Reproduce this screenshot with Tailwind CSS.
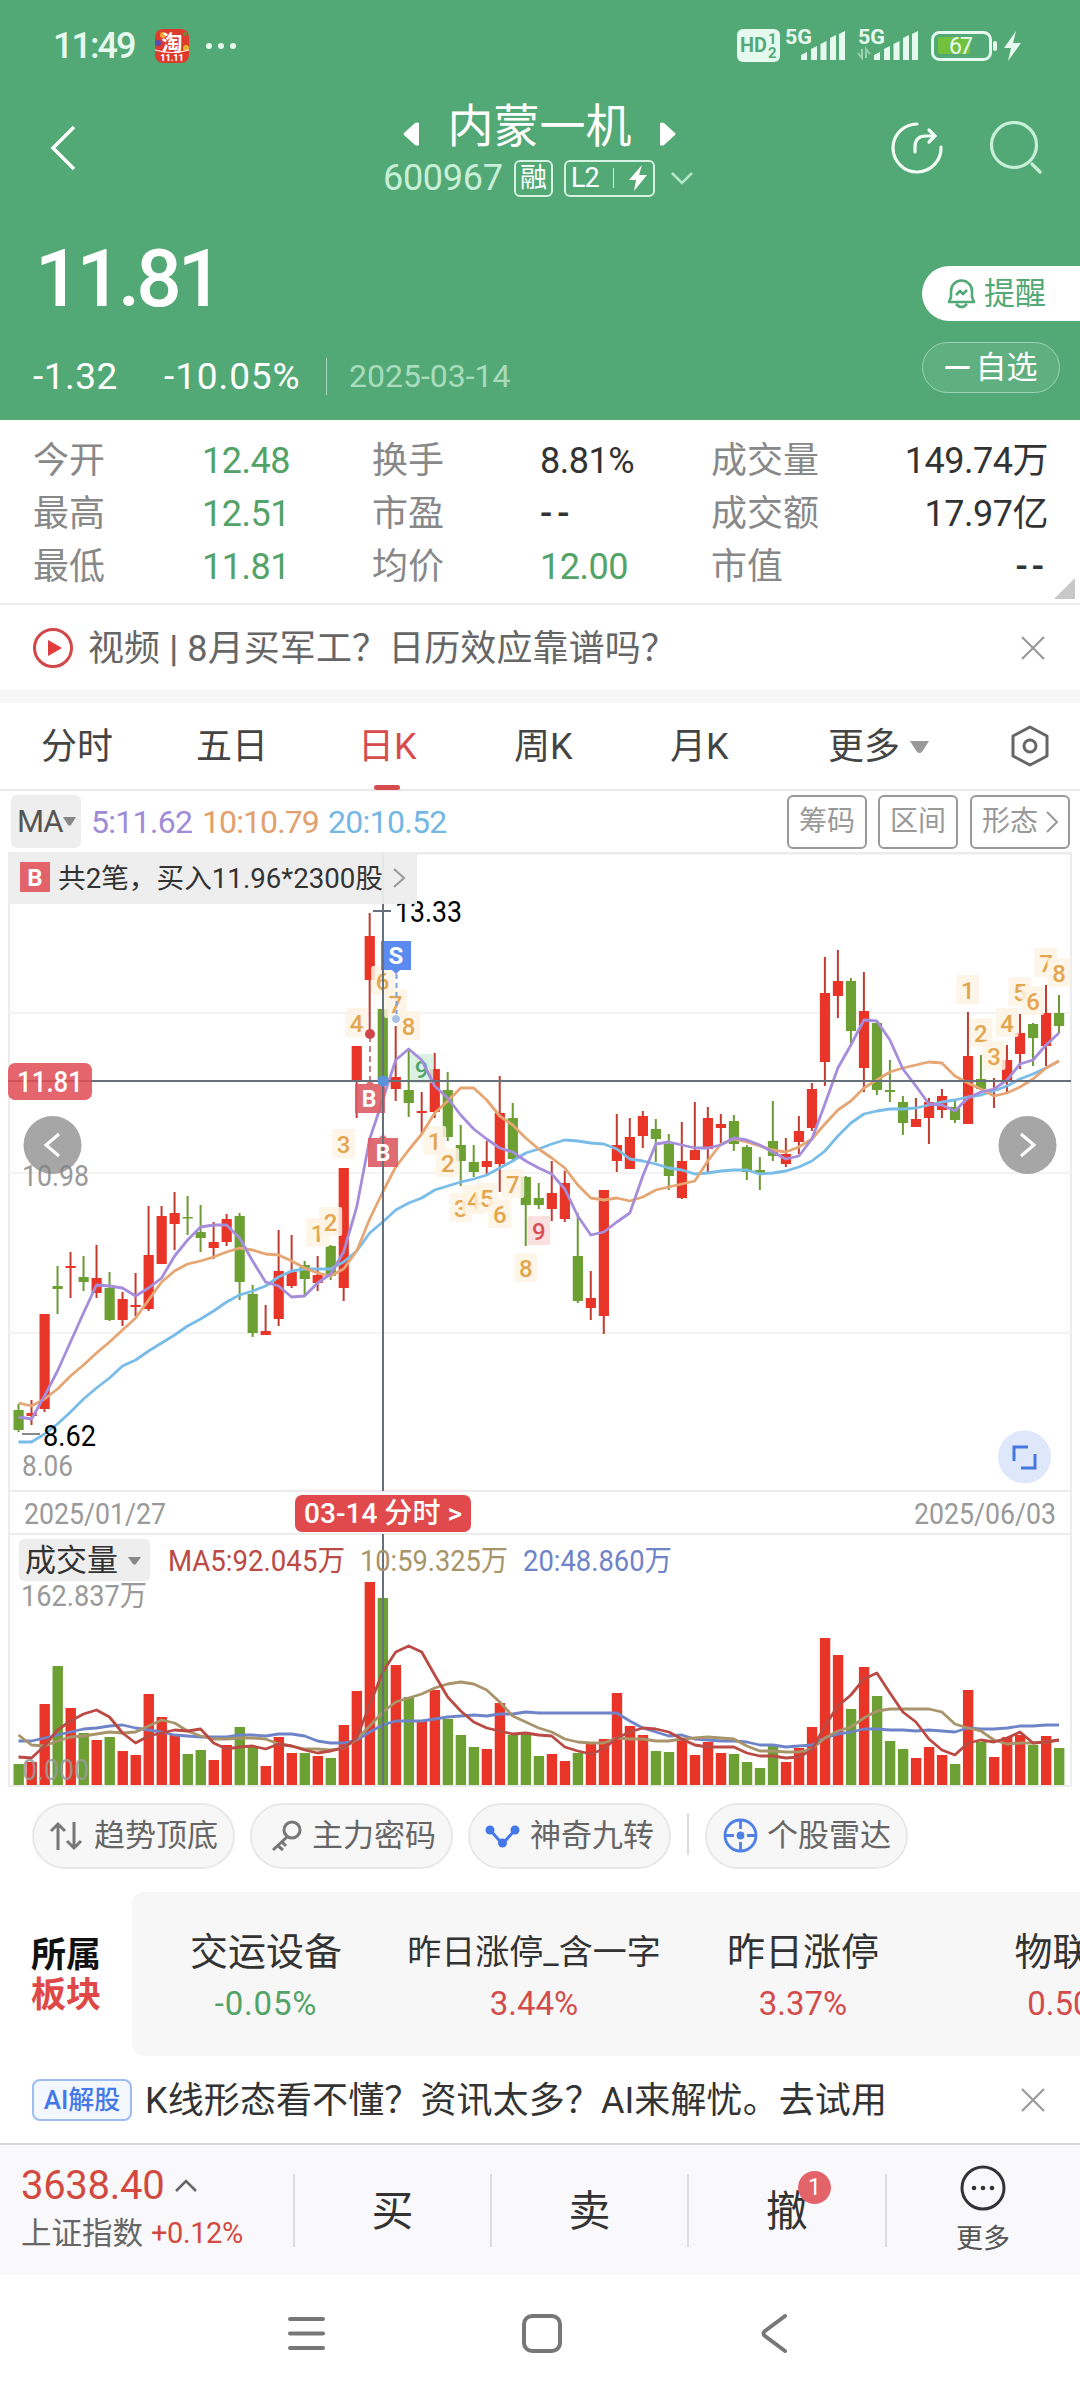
<!DOCTYPE html>
<html lang="zh-CN">
<head>
  <meta charset="UTF-8" />
  <meta name="viewport" content="width=device-width, initial-scale=1.0" />
  <title>内蒙一机 600967</title>
  <script src="https://cdn.jsdelivr.net/npm/@tailwindcss/browser@4"></script>
</head>
<body class="w-[1080px] h-[2400px] overflow-hidden bg-white text-[#333] font-['Roboto','Noto_Sans_CJK_SC',sans-serif]">

  <header class="h-[420px] bg-[#53a976] text-white">
    <!-- status bar -->
    <div class="h-[92px] flex items-center pl-[53px] text-[#e6f9ee]">
      <span class="w-[102px] text-[36px] font-medium tracking-[-2px]">11:49</span>
      <svg width="34" height="34" viewBox="0 0 34 34">
        <rect width="34" height="34" rx="8" fill="#df3b2c" />
        <circle cx="8" cy="6" r="3" fill="#f2a32c" /><circle cx="3" cy="14" r="3" fill="#5a4bb5" />
        <circle cx="31" cy="19" r="3" fill="#e8b62c" /><circle cx="30" cy="5" r="2" fill="#6c8f3a" />
        <text x="17" y="21" font-size="21" font-weight="700" fill="#fff" text-anchor="middle">淘</text>
        <path d="M0 21q17 5 34 0" stroke="#fff" fill="none" />
        <text x="17" y="32" font-size="9" font-weight="900" fill="#fff" text-anchor="middle">11.11</text>
      </svg>
      <span class="ml-[17px] flex gap-1.5">
        <i class="size-1.5 rounded-full bg-[#e6f9ee]"></i><i class="size-1.5 rounded-full bg-[#e6f9ee]"></i><i class="size-1.5 rounded-full bg-[#e6f9ee]"></i>
      </span>
      <svg class="ml-auto mr-[56px]" width="287" height="40" viewBox="737 26 287 40" fill="#e6f9ee">
        <rect x="737" y="29" width="43" height="33" rx="6" />
        <g fill="#53a976" font-weight="700">
          <text x="740" y="52" font-size="20" textLength="27" lengthAdjust="spacingAndGlyphs">HD</text>
          <text x="768" y="44" font-size="15">1</text>
          <text x="768" y="58" font-size="15">2</text>
        </g>
        <text x="785" y="44" font-size="20" font-weight="700" textLength="27" lengthAdjust="spacingAndGlyphs">5G</text>
        <path d="M801 60v-5l6-3v8zM811 60v-11l6-3v14zM820.500 60v-16l6-3v19zM830 60v-22l6-3v25zM839 60v-26l6-3v29z" />
        <text x="858" y="44" font-size="20" font-weight="700" textLength="27" lengthAdjust="spacingAndGlyphs">5G</text>
        <path d="M874 60v-5l6-3v8zM884 60v-11l6-3v14zM893.500 60v-16l6-3v19zM903 60v-22l6-3v25zM912 60v-26l6-3v29z" />
        <path d="M858 53l4 5v-9M870 54l-4-5v9" fill="none" stroke="#9bd0b0" stroke-width="2" />
        <rect x="932.500" y="32.500" width="58" height="27" rx="7" fill="none" stroke="#e6f9ee" stroke-width="3" />
        <rect x="938" y="37" width="32" height="17" rx="2" fill="#72c13c" />
        <text x="949" y="54" font-size="23" textLength="24">67</text>
        <rect x="993" y="41" width="4" height="10" rx="2" />
        <path d="M1016 31l-12 17h7l-3 13 13-18h-8z" />
      </svg>
    </div>

    <!-- title bar -->
    <div class="h-[112px] flex items-center">
      <svg class="ml-[48px]" width="30" height="48" viewBox="0 0 30 48" fill="none" stroke="#fff" stroke-width="3.500"><path d="M26 3L5 24l21 21" /></svg>
      <div class="ml-[305px] flex-1 flex flex-col pb-[6px]">
        <div class="flex items-center h-[66px] ml-[19px]">
          <svg width="18" height="26" viewBox="0 0 18 26" fill="#fff" class="mt-4"><path d="M17 2v22q-2 1-4 0L2 14q-1-1 0-2L13 2q2-1 4 0z" /></svg>
          <h1 class="w-[239px] text-center text-[46px] leading-none font-normal">内蒙一机</h1>
          <svg width="18" height="26" viewBox="0 0 18 26" fill="#fff" class="mt-4"><path d="M1 2v22q2 1 4 0l11-10q1-1 0-2L5 2q-2-1-4 0z" /></svg>
        </div>
        <div class="flex items-center h-[38px] leading-none">
          <span class="w-[131px] text-[36px] text-[#c8f0d8] tracking-[-0.3px]">600967</span>
          <span class="w-[39px] h-[37px] border-2 border-[#d5f3e1] rounded-md flex items-center justify-center text-[27px]">融</span>
          <span class="ml-[11px] w-[91px] h-[37px] border-2 border-[#d5f3e1] rounded-md flex items-center pl-[5px] text-[27px] tracking-[-1px]">L2
            <i class="ml-[14px] w-px h-[20px] bg-[#d5f3e1]"></i>
            <svg class="ml-[14px]" width="20" height="26" viewBox="0 0 20 26" fill="#fff"><path d="M14 0L1 15h7L6 26 19 10h-8z" /></svg>
          </span>
          <svg class="ml-[15px]" width="24" height="14" viewBox="0 0 24 14" fill="none" stroke="#b6e6c9" stroke-width="2.500"><path d="M2 2l10 10L22 2" /></svg>
        </div>
      </div>
      <svg class="mr-[45px]" width="54" height="54" viewBox="0 0 54 54" fill="none" stroke="#f2fdf6" stroke-width="3.200" stroke-linecap="round">
        <path d="M27 3a24 24 0 1 0 24 23" />
        <path d="M25 31v-5q0-11 11-11h9M39 9l6 6-6 6" />
      </svg>
      <svg class="mr-[37px]" width="54" height="54" viewBox="0 0 54 54" fill="none" stroke="#c8f0d8" stroke-width="3.200" stroke-linecap="round">
        <circle cx="25" cy="24" r="22.500" /><path d="M43 43l8 8" />
      </svg>
    </div>

    <!-- last price -->
    <div class="h-[216px] flex justify-between">
      <div>
        <div class="pt-[35px] pl-[35px] text-[80px] leading-[80px] font-medium tracking-[-4px]">11.81</div>
        <div class="mt-[37px] flex items-center h-[40px] text-[37px] leading-none">
          <span class="pl-[33px] w-[164px] tracking-[0.5px]">-1.32</span>
          <span class="w-[162px] tracking-[0.9px]">-10.05%</span>
          <i class="w-px h-[37px] bg-[#a9dcbc]"></i>
          <span class="ml-[22px] text-[32px] text-[#a9dcbc]">2025-03-14</span>
        </div>
      </div>
      <div class="pt-[62px] w-[158px]">
        <div class="h-[55px] pl-[25px] rounded-l-full bg-white text-[#53a976] flex items-center text-[31px]">
          <svg width="29" height="31" viewBox="0 0 29 31" fill="none" stroke="#53a976" stroke-width="2.600" stroke-linejoin="round">
            <path d="M4 19v-6a10.500 10.500 0 0 1 21 0v6l2 5H2zM9 26q5.500 6 11 0" /><path d="M9 17l4-4 3 3 4-4" />
          </svg>
          <span class="ml-[8px] pt-[2px]">提醒</span>
        </div>
        <div class="mt-[21px] w-[138px] h-[51px] rounded-full border border-[#9bd5b1] bg-white/8 flex items-center justify-center text-[31px]"><i class="w-[25px] h-[3px] rounded bg-white mr-[6px]"></i><span class="pt-[2px]">自选</span></div>
      </div>
    </div>
  </header>

  <!-- quote stats -->
  <section class="relative h-[185px] pt-[14px] border-b-2 border-[#ededed]">
    <div class="grid grid-cols-[169px_170px_168px_171px_180px_157px] pl-[33px] auto-rows-[53px] items-center text-[36px] leading-none tracking-[-0.5px] text-[#333]">
      <span class="text-[#888] tracking-normal">今开</span><span class="text-[#53a368]">12.48</span>
      <span class="text-[#888] tracking-normal">换手</span><span>8.81%</span>
      <span class="text-[#888] tracking-normal">成交量</span><span class="text-right whitespace-nowrap">149.74万</span>
      <span class="text-[#888] tracking-normal">最高</span><span class="text-[#53a368]">12.51</span>
      <span class="text-[#888] tracking-normal">市盈</span><span class="tracking-[5px] font-medium">--</span>
      <span class="text-[#888] tracking-normal">成交额</span><span class="text-right whitespace-nowrap">17.97亿</span>
      <span class="text-[#888] tracking-normal">最低</span><span class="text-[#53a368]">11.81</span>
      <span class="text-[#888] tracking-normal">均价</span><span class="text-[#53a368]">12.00</span>
      <span class="text-[#888] tracking-normal">市值</span><span class="text-right tracking-[4px] font-medium">--</span>
    </div>
    <svg class="absolute right-[5px] bottom-[4px]" width="21" height="21"><path d="M21 0v21H0z" fill="#c8c8c8" /></svg>
  </section>

  <!-- video tip -->
  <section class="h-[85px] pl-[33px] pr-[35px] flex items-center text-[#666]">
    <svg width="40" height="40" viewBox="0 0 40 40"><circle cx="20" cy="20" r="18.500" fill="none" stroke="#d24848" stroke-width="3" /><path d="M15 12l14 8-14 8z" fill="#e03c3c" /></svg>
    <span class="ml-[15px] pt-[2px] flex-1 text-[36px] tracking-[0.1px]">视频 <b class="font-medium">|</b> 8月买军工？日历效应靠谱吗？</span>
    <svg width="24" height="24" viewBox="0 0 24 24" stroke="#999" stroke-width="2.200"><path d="M1 1l22 22M23 1L1 23" /></svg>
  </section>
  <div class="h-[13px] bg-[#f7f7f7]"></div>

  <!-- period tabs -->
  <nav class="relative h-[88px] border-b-2 border-[#e9e9e9] flex items-center pl-[41px] pt-[2px] text-[36px] text-[#444]">
    <span class="w-[155px]">分时</span>
    <span class="w-[162px]">五日</span>
    <span class="w-[156px] text-[#d64c4c]">日K</span>
    <span class="w-[156px]">周K</span>
    <span class="w-[158px]">月K</span>
    <span>更多</span>
    <svg class="ml-[10px]" width="19" height="13"><path d="M0 0h19l-7 11q-2 2-5 0z" fill="#999" /></svg>
    <svg class="absolute right-[30px] top-[22px]" width="40" height="42" viewBox="0 0 40 42" fill="none" stroke="#666" stroke-width="3" stroke-linejoin="round"><path d="M20 2l17 9v20l-17 9-17-9V11z" /><circle cx="20" cy="21" r="6" /></svg>
    <i class="absolute left-[374px] bottom-[-1px] w-[26px] h-[5px] rounded-full bg-[#d64c4c]"></i>
  </nav>

  <!-- indicator row -->
  <div class="h-[61px] pl-[11px] pr-[10px] flex items-center text-[32px] leading-none">
    <span class="w-[70px] h-[53px] bg-[#eee] rounded-md flex items-center pl-[6px] text-[31px] tracking-[-1px] text-[#555]">MA
      <svg width="13" height="10"><path d="M0 0h13l-5 8q-1.500 1-3 0z" fill="#888" /></svg>
    </span>
    <span class="ml-[10px] w-[111px] text-[#a08bd8] tracking-[-0.7px]">5:11.62</span>
    <span class="w-[126px] text-[#e2a06c] tracking-[-0.9px]">10:10.79</span>
    <span class="text-[#74b6e4] tracking-[-0.7px]">20:10.52</span>
    <span class="ml-auto w-[80px] h-[54px] border-2 border-[#999] rounded-md flex items-center justify-center text-[28px] text-[#999]">筹码</span>
    <span class="ml-[11px] w-[80px] h-[54px] border-2 border-[#999] rounded-md flex items-center justify-center text-[28px] text-[#999]">区间</span>
    <span class="ml-[12px] w-[100px] h-[54px] border-2 border-[#999] rounded-md flex items-center justify-center text-[28px] text-[#999]">形态
      <svg class="ml-[8px]" width="12" height="22" viewBox="0 0 12 22" fill="none" stroke="#999" stroke-width="2"><path d="M1 1l10 10L1 21" /></svg>
    </span>
  </div>

  <!-- candles and volume, drawn by the script below -->
  <svg id="chart" class="block" width="1080" height="936" viewBox="0 852 1080 936"></svg>

  <!-- strategy chips -->
  <section class="h-[104px] pl-[32px] flex items-center text-[31px] leading-none text-[#666] pb-[13px]">
    <span class="w-[203px] h-[66px] mt-[4px] rounded-full bg-[#f7f7f7] border-2 border-[#e8e8e8] flex items-center pl-[15px]">
      <svg class="mr-[9px]" width="36" height="30" viewBox="0 0 36 30" fill="none" stroke="#777" stroke-width="3"><path d="M9 29V3M2 10l7-7 7 7M25 1v26M18 20l7 7 7-7" /></svg>趋势顶底</span>
    <span class="ml-[15px] w-[203px] h-[66px] mt-[4px] rounded-full bg-[#f7f7f7] border-2 border-[#e8e8e8] flex items-center pl-[19px]">
      <svg class="mr-[9px]" width="32" height="32" viewBox="0 0 32 32" fill="none" stroke="#777" stroke-width="3"><circle cx="21" cy="10" r="8" /><path d="M16 17L2 30M6 25l6 5M10 21l5 5" /></svg>主力密码</span>
    <span class="ml-[15px] w-[203px] h-[66px] mt-[4px] rounded-full bg-[#f7f7f7] border-2 border-[#e8e8e8] flex items-center pl-[15px]">
      <svg class="mr-[10px]" width="35" height="26" viewBox="0 0 35 26"><path d="M5 7l12.500 14L30 7" fill="none" stroke="#4478e8" stroke-width="3" /><g fill="#4478e8"><circle cx="5" cy="7" r="4.500" /><circle cx="17.500" cy="20" r="4.500" /><circle cx="30" cy="7" r="4.500" /></g></svg>神奇九转</span>
    <i class="mx-[16px] w-[2px] h-[42px] bg-[#ddd]"></i>
    <span class="w-[203px] h-[66px] mt-[4px] rounded-full bg-[#f7f7f7] border-2 border-[#e8e8e8] flex items-center pl-[16px]">
      <svg class="mr-[9px]" width="35" height="35" viewBox="0 0 35 35" fill="none" stroke="#4f80e6" stroke-width="2.800"><circle cx="17.500" cy="17.500" r="15.500" /><path d="M17.500 2v9M17.500 24v9M2 17.500h9M24 17.500h9" /><circle cx="17.500" cy="17.500" r="2.500" fill="#4f80e6" /></svg>个股雷达</span>
  </section>

  <!-- related sectors -->
  <section class="h-[164px] flex items-center">
    <div class="w-[132px] pl-[31px] pt-[3px] text-[35px] leading-[40px] font-bold text-[#111]">所属<br /><span class="text-[#e04848]">板块</span></div>
    <div class="flex-1 h-full bg-[#f7f7f7] rounded-l-xl flex items-center overflow-hidden text-center">
      <div class="w-[268px] pt-[7px] shrink-0"><div class="h-[52px] text-[38px] leading-[50px]">交运设备</div><div class="text-[33px] leading-[50px] tracking-[0.8px] text-[#53a368]">-0.05%</div></div>
      <i class="w-px h-[63px] bg-[#ccc]"></i>
      <div class="w-[268px] pt-[7px] shrink-0"><div class="h-[52px] text-[34px] leading-[50px] whitespace-nowrap">昨日涨停_含一字</div><div class="text-[33px] leading-[50px] text-[#d24c4c]">3.44%</div></div>
      <i class="w-px h-[63px] bg-[#ccc]"></i>
      <div class="w-[268px] pt-[7px] pl-[2px] shrink-0"><div class="h-[52px] text-[38px] leading-[50px]">昨日涨停</div><div class="text-[33px] leading-[50px] text-[#d24c4c]">3.37%</div></div>
      <i class="w-px h-[63px] bg-[#ccc]"></i>
      <div class="w-[268px] pt-[7px] pl-[3px] shrink-0"><div class="h-[52px] text-[38px] leading-[50px]">物联网</div><div class="text-[33px] leading-[50px] text-[#d24c4c]">0.50%</div></div>
    </div>
  </section>

  <!-- AI tip -->
  <section class="h-[87px] pl-[32px] pr-[35px] flex items-center">
    <span class="w-[100px] h-[42px] border-2 border-[#9dbcf0] bg-[#f3f7ff] rounded-lg flex items-center justify-center text-[26px] leading-none text-[#4478e8] whitespace-nowrap font-medium">AI解股</span>
    <span class="ml-[13px] pt-[2px] flex-1 text-[36px] tracking-[0.1px] whitespace-nowrap">K线形态看不懂？资讯太多？AI来解忧。去试用</span>
    <svg width="24" height="24" viewBox="0 0 24 24" stroke="#999" stroke-width="2.200"><path d="M1 1l22 22M23 1L1 23" /></svg>
  </section>

  <!-- trade bar -->
  <footer class="h-[132px] bg-[#f9f9fc] border-t-2 border-[#d8d8da] flex items-center text-[42px]">
    <div class="w-[293px] pl-[21px]">
      <div class="flex items-center h-[48px] text-[40px] tracking-[-0.3px] text-[#d2493f]">3638.40
        <svg class="ml-[10px]" width="24" height="14" viewBox="0 0 24 14" fill="none" stroke="#666" stroke-width="2.600"><path d="M2 12L12 2l10 10" /></svg>
      </div>
      <div class="flex items-center h-[48px] text-[30.500px] text-[#666] whitespace-nowrap">上证指数<span class="ml-[8px] text-[29px] text-[#d2493f] tracking-[-0.4px]">+0.12%</span></div>
    </div>
    <i class="w-[2px] h-[73px] bg-[#ddd]"></i>
    <div class="w-[195px] pt-[2px] text-center">买</div>
    <i class="w-[2px] h-[73px] bg-[#ddd]"></i>
    <div class="w-[195px] pt-[2px] text-center">卖</div>
    <i class="w-[2px] h-[73px] bg-[#ddd]"></i>
    <div class="w-[196px] pt-[2px] text-center relative">撤<b class="absolute left-[109px] top-[-7px] size-[33px] rounded-full bg-[#e2636a] text-white text-[23px] leading-[33px] font-normal">1</b></div>
    <i class="w-[2px] h-[73px] bg-[#ddd]"></i>
    <div class="flex-1 flex flex-col items-center pt-[4px] pr-[1px] text-[27px] text-[#555]">
      <svg width="46" height="46" viewBox="0 0 46 46"><circle cx="23" cy="23" r="21" fill="none" stroke="#333" stroke-width="3" /><g fill="#333"><circle cx="14" cy="23" r="2.300" /><circle cx="23" cy="23" r="2.300" /><circle cx="32" cy="23" r="2.300" /></g></svg>
      <span class="mt-[8px] leading-[40px]">更多</span>
    </div>
  </footer>

  <!-- system navigation -->
  <div class="h-[124px] flex justify-center pt-[38px] pl-[3px] gap-[196px]">
    <svg width="38" height="40" viewBox="0 0 38 40" stroke="#777" stroke-width="4" stroke-linecap="round"><path d="M2 6h33M2 20.500h33M2 35h33" /></svg>
    <svg width="40" height="40" viewBox="0 0 40 40" fill="none" stroke="#777" stroke-width="4"><rect x="2" y="3" width="36" height="35" rx="8" /></svg>
    <svg width="38" height="40" viewBox="0 0 38 40" fill="none" stroke="#777" stroke-width="4" stroke-linecap="round"><path d="M27 3L7 18q-3 2.500 0 5l20 15" /></svg>
  </div>

  <script>
    const RED = '#e93527', GREEN = '#6ca033';
    const X0 = 18.5, STEP = 13.006;
    const x = i => X0 + i * STEP;

    // kind, high, body top, body bottom, low, volume top
    const days = [
      ['g',1404,1410,1430,1432,1764],['r',1400,1413,1416,1425,1762],['r',1314,1314,1409,1412,1704],['g',1266,1286,1289,1314,1666],
      ['r',1252,1266,1268,1298,1708],['g',1256,1277,1282,1291,1733],['r',1245,1278,1293,1298,1740],['g',1272,1288,1320,1321,1737],
      ['r',1292,1299,1320,1326,1751],['r',1273,1305,1307,1316,1755],['r',1206,1255,1309,1311,1694],['r',1206,1216,1264,1264,1717],
      ['r',1192,1213,1224,1250,1735],['g',1196,1217,1218,1235,1754],['g',1205,1232,1238,1252,1750],['r',1222,1242,1248,1259,1760],
      ['r',1214,1219,1242,1246,1745],['g',1213,1216,1282,1300,1727],['g',1285,1294,1333,1337,1747],['r',1305,1331,1335,1335,1766],
      ['r',1230,1271,1319,1326,1737],['r',1235,1272,1286,1288,1753],['g',1261,1265,1279,1296,1753],['r',1256,1275,1283,1291,1756],
      ['g',1245,1246,1276,1280,1758],['r',1168,1168,1288,1301,1725],['r',1046,1046,1081,1118,1691],['r',913,936,980,1031,1582],
      ['g',1009,1009,1081,1081,1598],['r',1026,1077,1089,1101,1665],['g',1050,1090,1103,1117,1697],['r',1092,1111,1113,1133,1721],
      ['r',1053,1069,1112,1118,1690],['g',1072,1090,1137,1141,1719],['g',1125,1145,1161,1186,1735],['g',1145,1162,1172,1177,1747],
      ['r',1141,1161,1167,1175,1749],['r',1076,1113,1164,1192,1703],['g',1103,1118,1159,1161,1735],['g',1176,1177,1205,1246,1733],
      ['g',1183,1198,1205,1209,1756],['r',1161,1193,1209,1221,1754],['r',1171,1183,1219,1222,1761],['g',1213,1256,1301,1303,1753],
      ['r',1271,1298,1308,1320,1744],['r',1190,1190,1316,1334,1739],['r',1114,1145,1161,1172,1693],['r',1118,1137,1169,1169,1726],
      ['r',1111,1116,1136,1148,1735],['g',1119,1129,1139,1162,1751],['g',1134,1144,1176,1190,1752],['r',1122,1161,1198,1199,1740],
      ['r',1102,1150,1160,1160,1755],['r',1107,1118,1149,1173,1742],['r',1114,1124,1128,1146,1753],['g',1115,1121,1144,1151,1754],
      ['g',1145,1147,1172,1180,1762],['g',1157,1170,1173,1190,1768],['g',1101,1141,1156,1161,1746],['r',1138,1154,1164,1167,1762],
      ['r',1116,1131,1142,1154,1748],['r',1083,1089,1128,1131,1727],['r',957,993,1062,1086,1638],['r',950,981,996,1018,1655],
      ['g',978,981,1031,1043,1709],['r',972,1011,1068,1092,1667],['g',1020,1023,1090,1095,1696],['g',1060,1090,1092,1102,1741],
      ['g',1096,1102,1123,1135,1749],['r',1098,1119,1127,1127,1758],['r',1098,1102,1118,1144,1747],['r',1089,1096,1110,1118,1755],
      ['g',1101,1107,1120,1123,1764],['r',1012,1056,1124,1124,1690],['g',1055,1079,1089,1089,1742],['r',1078,1089,1090,1108,1757],
      ['r',1045,1060,1082,1092,1737],['r',1014,1033,1054,1069,1735],['g',1023,1024,1038,1066,1745],['r',985,1013,1046,1066,1736],
      ['g',995,1013,1026,1033,1748]
    ];

    const priceLines = [
      ['#79bce8', [1442,1442,1434,1424,1412,1399,1388,1378,1366,1360,1351,1343,1335,1326,1319,1311,1302,1295,1291,1286,1277,1271,1269,1269,1269,1262,1251,1233,1222,1210,1203,1198,1190,1186,1182,1179,1175,1168,1161,1153,1149,1144,1140,1141,1143,1144,1149,1159,1161,1164,1168,1170,1174,1173,1171,1170,1170,1174,1173,1171,1167,1161,1151,1136,1123,1114,1111,1109,1109,1108,1105,1102,1100,1097,1095,1091,1086,1079,1074,1068,1061]],
      ['#e6a673', [1403,1406,1399,1389,1376,1365,1353,1342,1330,1318,1300,1282,1271,1264,1261,1257,1252,1248,1250,1254,1255,1261,1268,1273,1276,1269,1251,1219,1192,1167,1150,1134,1113,1101,1088,1088,1100,1116,1125,1138,1149,1158,1168,1185,1198,1200,1198,1201,1197,1190,1187,1184,1181,1161,1144,1139,1142,1146,1150,1152,1147,1139,1124,1110,1101,1088,1080,1072,1068,1065,1062,1063,1076,1083,1089,1096,1093,1087,1079,1068,1061]],
      ['#a58ddb', [1417,1419,1396,1371,1342,1313,1285,1286,1288,1296,1288,1278,1256,1240,1227,1225,1225,1238,1261,1282,1286,1297,1296,1283,1274,1252,1207,1139,1100,1060,1049,1060,1086,1098,1115,1129,1139,1148,1152,1161,1168,1174,1189,1216,1235,1232,1222,1213,1176,1144,1142,1145,1148,1148,1145,1138,1140,1145,1152,1159,1156,1139,1104,1068,1045,1020,1021,1040,1069,1086,1104,1105,1111,1098,1092,1089,1080,1064,1060,1045,1033]]
    ];

    const volumeLines = [
      ['#6f83c8', [1741,1741,1738,1735,1732,1729,1728,1726,1725,1728,1730,1732,1735,1736,1737,1737,1737,1735,1735,1736,1734,1734,1736,1741,1743,1743,1740,1732,1725,1721,1721,1721,1719,1717,1716,1715,1716,1714,1714,1712,1713,1713,1713,1713,1713,1713,1713,1721,1728,1732,1736,1735,1739,1740,1741,1741,1742,1745,1745,1747,1746,1745,1738,1734,1732,1729,1729,1730,1730,1731,1730,1731,1732,1728,1729,1729,1728,1726,1726,1725,1725]],
      ['#a8946a', [1735,1745,1746,1741,1737,1736,1734,1732,1733,1732,1726,1720,1723,1731,1736,1739,1739,1738,1738,1739,1744,1746,1749,1749,1750,1748,1739,1726,1712,1702,1698,1694,1688,1684,1682,1684,1690,1702,1716,1722,1728,1732,1739,1742,1743,1743,1738,1739,1739,1741,1741,1739,1738,1737,1738,1739,1746,1751,1751,1752,1752,1749,1738,1731,1727,1718,1711,1709,1709,1709,1709,1712,1724,1728,1731,1740,1744,1743,1743,1742,1740]],
      ['#ba4a43', [1757,1758,1746,1730,1721,1714,1710,1717,1733,1743,1736,1733,1730,1731,1729,1743,1749,1747,1746,1749,1744,1746,1750,1753,1751,1748,1738,1705,1672,1652,1646,1652,1675,1697,1711,1722,1728,1731,1734,1733,1735,1736,1747,1751,1754,1749,1738,1732,1728,1729,1732,1739,1745,1747,1747,1747,1753,1756,1756,1758,1757,1750,1726,1706,1695,1679,1673,1693,1712,1722,1739,1750,1755,1743,1740,1742,1738,1732,1743,1742,1740]]
    ];

    // nine-turn marks: label, day, y
    const marks = [
      ['1',23,1233],['2',24,1222],['3',25,1144],['4',26,1023],['6',28,981],['7',29,1004],['8',30,1026],['9',31,1069,'g'],
      ['1',32,1141],['2',33,1163],['3',34,1208],['4',35,1200],['5',36,1198],['6',37,1214],['7',38,1184],['8',39,1268],['9',40,1231,'r'],
      ['1',73,990],['2',74,1033],['3',75,1056],['4',76,1023],['5',77,992],['6',78,1001],['7',79,963],['8',80,973]
    ];
    const markColors = { o: ['#fdf3e4', '#e3a64e'], g: ['#d3efdf', '#4aa56a'], r: ['#fadadb', '#d94f55'] };

    const text = (s, tx, ty, size, fill, len, extra = '') =>
      `<text x="${tx}" y="${ty}" font-size="${size}" fill="${fill}" ${len ? `textLength="${len}" lengthAdjust="spacingAndGlyphs"` : ''} ${extra}>${s}</text>`;
    const line = ([color, ys]) =>
      `<polyline points="${ys.map((v, i) => `${x(i).toFixed(1)},${v}`).join(' ')}" fill="none" stroke="${color}" stroke-width="2.8" stroke-linejoin="round" />`;
    const circle = (cx, cy, path) =>
      `<circle cx="${cx}" cy="${cy}" r="29" fill="#808080" fill-opacity=".7" /><path d="${path}" fill="none" stroke="#fff" stroke-width="3" />`;

    let out = '';

    // frame and grid
    out += '<g fill="none" stroke="#ececec" stroke-width="2"><path d="M9 1787V852H1071V1787" /><path d="M9 1491H1071M9 1534H1071M9 1786H1071" /></g>';
    out += '<path d="M9 853H1071" stroke="#ececec" stroke-width="3" />';
    out += '<path d="M9 1013H1071M9 1173H1071M9 1333H1071" stroke="#f3f3f3" stroke-width="2" />';
    out += text('10.98', 22, 1186, 29, '#999', 67) + text('8.06', 22, 1476, 29, '#999', 51);

    days.forEach(([kind, hi, top, bottom, lo, vol], i) => {
      const c = kind === 'r' ? RED : GREEN;
      out += `<rect x="${x(i) - 1}" y="${hi}" width="2" height="${lo - hi}" fill="${kind === 'r' ? '#c23b30' : '#6c9a35'}" />`;
      out += `<rect x="${x(i) - 5}" y="${top}" width="10.2" height="${Math.max(bottom - top, 1.5)}" fill="${c}" />`;
      out += `<rect x="${x(i) - 5}" y="${vol}" width="10.4" height="${1785 - vol}" fill="${c}" />`;
    });
    marks.forEach(([label, day, y, tone = 'o']) => {
      const [bg, fg] = markColors[tone];
      out += `<rect x="${x(day) - 11.5}" y="${y - 15}" width="23" height="29" rx="2" fill="${bg}" fill-opacity=".85" />`;
      out += text(label, x(day), y + 8.5, 24, fg, 0, 'text-anchor="middle" font-weight="500"');
    });
    out += priceLines.map(line).join('') + volumeLines.map(line).join('');

    // buy / sell flags
    out += '<path d="M370 1036V1084" stroke="#c87f86" stroke-width="2" stroke-dasharray="6 4" /><circle cx="370" cy="1034" r="5" fill="#d0454c" />';
    out += '<path d="M396.500 974V1014" stroke="#7f9fd8" stroke-width="2" stroke-dasharray="5 4" /><circle cx="396" cy="1019" r="4.500" fill="#a8c0e6" stroke="#fff" />';
    out += '<path d="M355 1084h11l4-4 4 4h11v29h-30zM368 1138h11l4-4 4 4h11v29h-30z" fill="#dd5c64" fill-opacity=".9" />';
    out += '<path d="M381 941h30v29h-11l-4 4-4-4h-11z" fill="#5b8bef" />';

    // crosshair
    out += '<path d="M9 1081H1071M383 853V1491M383 1534V1785M373 911H391" stroke="#68707c" stroke-width="2" /><circle cx="383" cy="1081" r="5.500" fill="#5b92d8" />';
    out += text('B', 369, 1107, 23, '#fff', 0, 'text-anchor="middle" font-weight="700"');
    out += text('B', 383, 1161, 23, '#fff', 0, 'text-anchor="middle" font-weight="700"');
    out += text('S', 396, 964, 24, '#fff', 0, 'text-anchor="middle" font-weight="700"');
    out += text('13.33', 395, 922, 29, '#000', 67);
    out += '<path d="M22 1434H40" stroke="#888" stroke-width="2" />' + text('8.62', 43, 1446, 29, '#000', 53);
    out += '<rect x="8" y="1063" width="84" height="37" rx="7" fill="#e4666c" /><path d="M8 1081H92" stroke="#cf5259" stroke-width="2" />' + text('11.81', 17, 1092, 29, '#fff', 66, 'font-weight="500"');
    out += circle(52.5, 1145, 'M59 1134l-13 11 13 11') + circle(1027.5, 1145, 'M1021 1134l13 11-13 11');
    out += '<circle cx="1024.500" cy="1457" r="26.500" fill="#dfe8fb" /><path d="M1028 1447h-14v14M1021 1468h14v-14" fill="none" stroke="#4478e0" stroke-width="3" />';

    // trade summary banner
    out += '<rect x="8" y="853" width="409" height="51" fill="#ededed" fill-opacity=".94" /><rect x="20" y="862" width="30" height="30" rx="1" fill="#e2646a" />';
    out += text('B', 35, 886, 24, '#fff', 0, 'text-anchor="middle" font-weight="700"');
    out += text('共2笔，买入11.96*2300股', 58, 888, 27, '#333', 325) + '<path d="M394 869l10 9-10 9" fill="none" stroke="#999" stroke-width="2" />';

    // dates
    out += text('2025/01/27', 24, 1524, 29, '#999', 142) + text('2025/06/03', 914, 1524, 29, '#999', 142);
    out += '<rect x="295" y="1495" width="176" height="37" rx="7" fill="#e04a4d" />' + text('03-14 分时 &gt;', 304, 1523, 28, '#fff', 158, 'font-weight="500"');

    // volume legend
    out += '<rect x="19" y="1539" width="131" height="42" rx="5" fill="#eee" />' + text('成交量', 25, 1571, 31, '#333', 93) + '<path d="M128 1557h13l-5 7q-1.500 1-3 0z" fill="#888" />';
    out += text('MA5:92.045万', 168, 1571, 29, '#ba4a43', 177) + text('10:59.325万', 360, 1571, 29, '#a8946a', 148) + text('20:48.860万', 523, 1571, 29, '#6f83c8', 149);
    out += text('162.837万', 21, 1606, 29, '#999', 126) + text('0.000', 22, 1780, 29, '#999', 67, 'fill-opacity=".9"');

    document.getElementById('chart').innerHTML = out;
  </script>
</body>
</html>
